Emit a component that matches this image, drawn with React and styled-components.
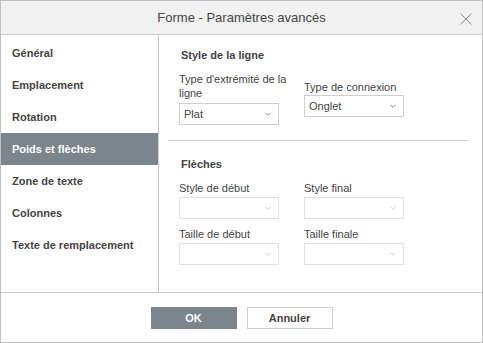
import React from "react";
import styled, { createGlobalStyle } from "styled-components";

const Global = createGlobalStyle`
  html, body { margin: 0; padding: 0; background: #fff; }
  body { font-family: "Liberation Sans", Arial, sans-serif; font-size: 11px; color: #444; }
  * { box-sizing: border-box; }
`;

const Dialog = styled.div`
  width: 483px;
  height: 343px;
  border: 1px solid #c0c0c0;
  display: flex;
  flex-direction: column;
  background: #fff;
`;

const Header = styled.div`
  height: 34px;
  flex: none;
  background: #f1f1f1;
  border-bottom: 1px solid #cbcbcb;
  display: flex;
  align-items: center;
  justify-content: center;
  position: relative;
  font-size: 13px;
  color: #444;
`;

const Close = styled.button`
  position: absolute;
  right: 10px;
  top: 12px;
  width: 12px;
  height: 12px;
  padding: 0;
  border: none;
  background: none;
  display: flex;
`;

const Body = styled.div`
  flex: 1;
  display: flex;
  min-height: 0;
`;

const Sidebar = styled.div`
  width: 158px;
  flex: none;
  border-right: 1px solid #cbcbcb;
  padding-top: 2px;
  display: flex;
  flex-direction: column;
`;

const NavItem = styled.div`
  height: 32px;
  display: flex;
  align-items: center;
  padding-left: 11px;
  font-weight: bold;
  font-size: 11px;
  color: ${(p) => (p.$active ? "#fff" : "#444")};
  background: ${(p) => (p.$active ? "#7d858c" : "transparent")};
`;

const Content = styled.div`
  flex: 1;
  display: flex;
  flex-direction: column;
`;

const Section = styled.div`
  padding: ${(p) => p.$pad};
`;

const Heading = styled.div`
  font-weight: bold;
  line-height: 14px;
  padding-left: 2px;
  margin-bottom: ${(p) => p.$mb}px;
`;

const Grid = styled.div`
  display: grid;
  grid-template-columns: 115px 100px;
  column-gap: 10px;
  row-gap: ${(p) => p.$rowGap || 0}px;
  align-items: ${(p) => p.$align || "start"};
`;

const Field = styled.div`
  display: flex;
  flex-direction: column;
`;

const Label = styled.div`
  line-height: 14px;
  margin-bottom: ${(p) => p.$mb}px;
`;

const SelectBox = styled.div`
  width: 100px;
  height: 22px;
  border: 1px solid ${(p) => (p.$disabled ? "#e2e2e2" : "#cfcfcf")};
  display: flex;
  align-items: center;
  justify-content: space-between;
  padding: 0 7px 0 4px;
  color: #444;
  font-size: 11px;
  background: #fff;
`;

const Separator = styled.div`
  height: 1px;
  background: #d4d4d4;
  margin: ${(p) => p.$m};
`;

const Footer = styled.div`
  height: 50px;
  flex: none;
  border-top: 1px solid #cbcbcb;
  display: flex;
  align-items: center;
  justify-content: center;
  gap: 10px;
  padding-top: 1px;
`;

const Button = styled.button`
  width: 86px;
  height: 22px;
  font-family: "Liberation Sans", Arial, sans-serif;
  font-size: 11px;
  font-weight: bold;
  border: 1px solid ${(p) => (p.$primary ? "#7d858c" : "#cfcfcf")};
  background: ${(p) => (p.$primary ? "#7d858c" : "#fff")};
  color: ${(p) => (p.$primary ? "#fff" : "#444")};
  padding: 0;
`;

const Chevron = ({ light }) => (
  <svg width="6" height="4" viewBox="0 0 6 4">
    <path d="M0.5 0.8 L3 3.3 L5.5 0.8" fill="none" stroke={light ? "#cdcdcd" : "#888"} strokeWidth="1" />
  </svg>
);

const Select = ({ value, disabled }) => (
  <SelectBox $disabled={disabled}>
    <span>{value}</span>
    <Chevron light={disabled} />
  </SelectBox>
);

const nav = [
  "Général",
  "Emplacement",
  "Rotation",
  "Poids et flèches",
  "Zone de texte",
  "Colonnes",
  "Texte de remplacement",
];

export default function App() {
  return (
    <>
      <Global />
      <Dialog>
        <Header>
          Forme - Paramètres avancés
          <Close aria-label="Fermer">
            <svg width="12" height="12" viewBox="0 0 12 12">
              <path d="M0.5 0.5 L11.5 11.5 M11.5 0.5 L0.5 11.5" stroke="#8a8a8a" strokeWidth="1" />
            </svg>
          </Close>
        </Header>
        <Body>
          <Sidebar>
            {nav.map((n) => (
              <NavItem key={n} $active={n === "Poids et flèches"}>
                {n}
              </NavItem>
            ))}
          </Sidebar>
          <Content>
            <Section $pad="13px 0 0 20px">
              <Heading $mb={10}>Style de la ligne</Heading>
              <Grid $align="center">
                <Field>
                  <Label $mb={3}>Type d'extrémité de la ligne</Label>
                  <Select value="Plat" />
                </Field>
                <Field>
                  <Label $mb={1}>Type de connexion</Label>
                  <Select value="Onglet" />
                </Field>
              </Grid>
            </Section>
            <Separator $m="15px 13px 0 9px" />
            <Section $pad="16px 0 0 20px">
              <Heading $mb={10}>Flèches</Heading>
              <Grid $rowGap={8}>
                <Field>
                  <Label $mb={2}>Style de début</Label>
                  <Select disabled />
                </Field>
                <Field>
                  <Label $mb={2}>Style final</Label>
                  <Select disabled />
                </Field>
                <Field>
                  <Label $mb={2}>Taille de début</Label>
                  <Select disabled />
                </Field>
                <Field>
                  <Label $mb={2}>Taille finale</Label>
                  <Select disabled />
                </Field>
              </Grid>
            </Section>
          </Content>
        </Body>
        <Footer>
          <Button $primary>OK</Button>
          <Button>Annuler</Button>
        </Footer>
      </Dialog>
    </>
  );
}
